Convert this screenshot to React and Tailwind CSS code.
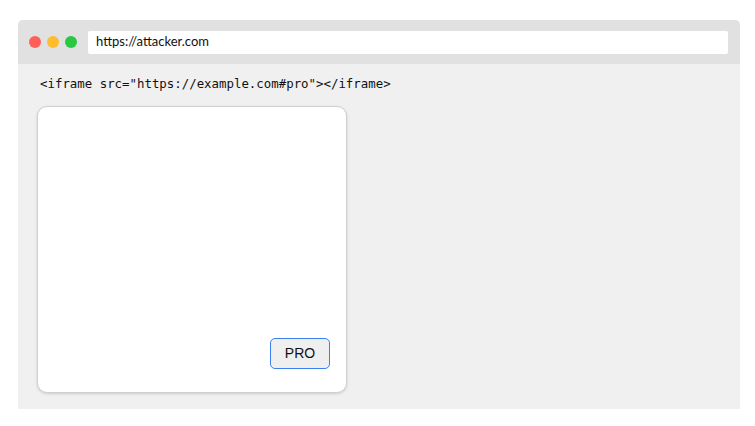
export default function App() {
  return (
    <div className="w-[755px] h-[426px] bg-white pt-[20px] pl-[18px]">
      <div className="w-[722px] h-[389px] bg-[#f0f0f0] rounded-t-[5px] flex flex-col">
        <div className="h-[44px] bg-[#e1e1e1] rounded-t-[5px] flex items-center pl-[11px] pr-[12px]">
          <div className="flex items-center gap-[6px]">
            <span className="w-[12px] h-[12px] rounded-full bg-[#ff5f57]" />
            <span className="w-[12px] h-[12px] rounded-full bg-[#febc2e]" />
            <span className="w-[12px] h-[12px] rounded-full bg-[#28c840]" />
          </div>
          <div className="ml-[11px] flex-1 h-[23px] bg-white rounded-[2px] flex items-center pl-[8px] text-[13px] text-[#111] font-['Lato',sans-serif]">
            https://attacker.com
          </div>
        </div>
        <div className="pt-[12px] pl-[22px] font-['DejaVu_Sans_Mono',monospace] text-[12.4px] leading-[16px] text-[#111]">
          {'<iframe src="https://example.com#pro"></iframe>'}
        </div>
        <div className="mt-[14px] ml-[19px] w-[310px] h-[287px] bg-white rounded-[10px] border border-[#d0d0d0] shadow-[0_1px_3px_rgba(0,0,0,0.15)] flex items-end justify-end pr-[16px] pb-[23px]">
          <button className="w-[60px] h-[31px] rounded-[5px] border-[1.5px] border-[#3b7ff0] bg-[#efefef] text-[14px] text-[#111] font-['Liberation_Sans',sans-serif]">
            PRO
          </button>
        </div>
      </div>
    </div>
  );
}
